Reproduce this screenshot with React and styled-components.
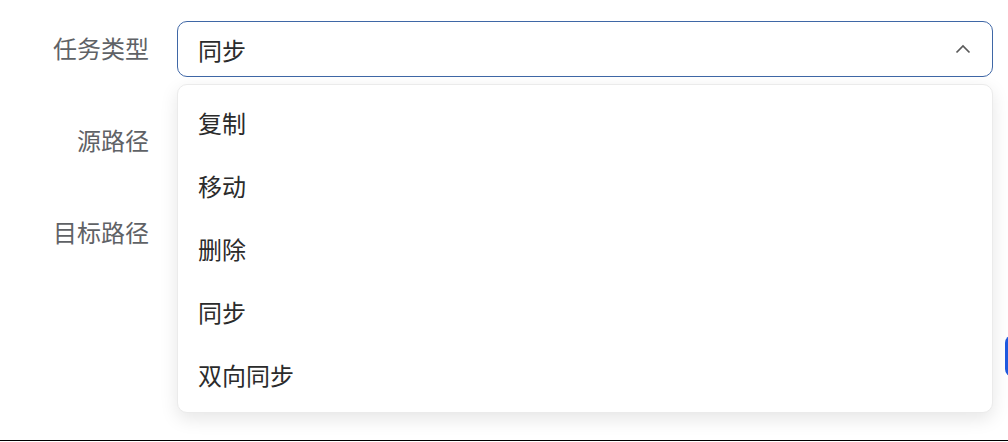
import React, { useState } from 'react'
import styled, { createGlobalStyle } from 'styled-components'

const TaskTypes = [
  { key: 'copy', value: '复制' },
  { key: 'move', value: '移动' },
  { key: 'delete', value: '删除' },
  { key: 'sync', value: '同步' },
  { key: 'bisync', value: '双向同步' },
]

const Global = createGlobalStyle`
  html, body {
    margin: 0;
    padding: 0;
    background: #fff;
    overflow: hidden;
  }
  body {
    font-family: "Noto Sans CJK SC", "Noto Sans", sans-serif;
  }
`

const Page = () => {
  const [taskType, setTaskType] = useState('sync')
  const [open, setOpen] = useState(true)
  const current = TaskTypes.find(t => t.key === taskType)

  return (
    <Wrap>
      <Global />
      <Form>
        <Row>
          <Label>任务类型</Label>
          <SelectBox>
            <Trigger $open={open} onClick={() => setOpen(!open)}>
              <span>{current.value}</span>
              <Chevron viewBox="0 0 16 10" $open={open}>
                <path d="M1.5 8.5 L8 2 L14.5 8.5" />
              </Chevron>
            </Trigger>
            {open && (
              <Menu>
                {TaskTypes.map(t => (
                  <Item
                    key={t.key}
                    onClick={() => { setTaskType(t.key); setOpen(false) }}
                  >
                    {t.value}
                  </Item>
                ))}
              </Menu>
            )}
          </SelectBox>
        </Row>
        <Row>
          <Label>源路径</Label>
          <Input type="text" />
        </Row>
        <Row>
          <Label>目标路径</Label>
          <Input type="text" />
        </Row>
        <Footer>
          <span />
          <SubmitButton aria-label="确定" />
        </Footer>
      </Form>
    </Wrap>
  )
}

export default Page

const Wrap = styled.main`
  height: 440px;
  border-bottom: 1px solid #000;
  overflow: hidden;
`

const Form = styled.div`
  display: flex;
  flex-direction: column;
  gap: 36px;
  padding-top: 21px;
  width: 1100px;
`

const Row = styled.div`
  display: grid;
  grid-template-columns: 149px 816px;
  column-gap: 28px;
  align-items: center;
  height: 56px;
`

const Label = styled.label`
  text-align: right;
  font-size: 24px;
  line-height: 1;
  color: #5f6266;
  white-space: nowrap;
  margin-top: -3px;
`

const SelectBox = styled.div`
  position: relative;
  height: 100%;
`

const Trigger = styled.div`
  box-sizing: border-box;
  height: 56px;
  display: flex;
  align-items: center;
  justify-content: space-between;
  padding: 0 21px 0 20px;
  border: 1px solid ${p => (p.$open ? '#3f67a6' : '#dcdfe6')};
  border-radius: 10px;
  font-size: 24px;
  color: #2b2b2b;
  cursor: pointer;
`

const Chevron = styled.svg`
  width: 16px;
  height: 10px;
  fill: none;
  stroke: #5a5a5a;
  stroke-width: 1.7;
  transform: ${p => (p.$open ? 'none' : 'rotate(180deg)')};
`

const Menu = styled.ul`
  position: absolute;
  top: 63px;
  left: 0;
  right: 0;
  z-index: 10;
  margin: 0;
  padding: 6px 0 6px;
  list-style: none;
  background: #fff;
  border: 1px solid #ebebeb;
  border-radius: 10px;
  box-shadow: 0 6px 18px rgba(0, 0, 0, 0.1);
`

const Item = styled.li`
  height: 63px;
  display: flex;
  align-items: center;
  padding-left: 20px;
  font-size: 24px;
  color: #2b2b2b;
  cursor: pointer;
`

const Input = styled.input`
  box-sizing: border-box;
  height: 56px;
  border: 1px solid #dcdfe6;
  border-radius: 10px;
  padding: 0 20px;
  font-size: 24px;
`

const Footer = styled.div`
  display: grid;
  grid-template-columns: 1005px 90px;
  height: 42px;
  margin-top: 38px;
`

const SubmitButton = styled.button`
  height: 42px;
  border: none;
  border-radius: 8px;
  background: #1f5ae0;
`
